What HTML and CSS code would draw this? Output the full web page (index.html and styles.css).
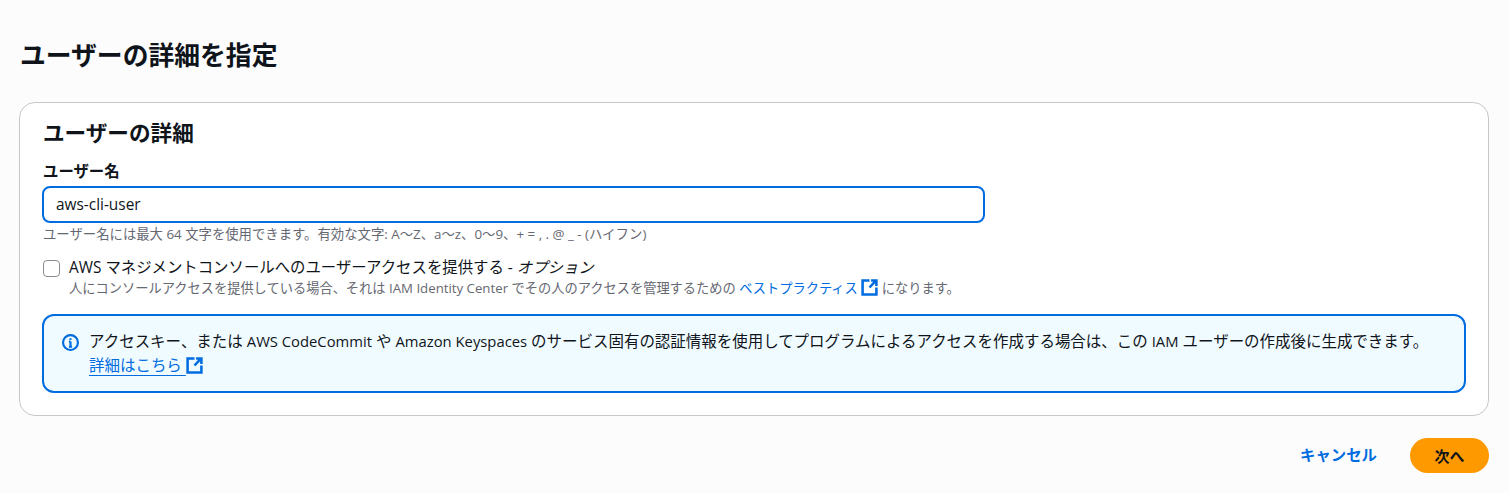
FILE: index.html
```html
<!DOCTYPE html>
<html lang="ja">
<head>
    <meta charset="UTF-8">
    <title>ユーザーの詳細を指定</title>
    <link rel="stylesheet" href="styles.css">
</head>
<body>
    <div class="page">
        <h1 class="page-title">ユーザーの詳細を指定</h1>

        <div class="card">
            <h2 class="card-title">ユーザーの詳細</h2>

            <label class="field-label" for="userName">ユーザー名</label>
            <input class="text-input" id="userName" type="text" value="aws-cli-user">
            <p class="hint">ユーザー名には最大 64 文字を使用できます。有効な文字: A～Z、a～z、0～9、+ = , . @ _ - (ハイフン)</p>

            <div class="check-row">
                <span class="checkbox"></span>
                <div>
                    <div class="check-label">AWS マネジメントコンソールへのユーザーアクセスを提供する - <em>オプション</em></div>
                    <div class="check-desc">人にコンソールアクセスを提供している場合、それは IAM Identity Center でその人のアクセスを管理するための <a class="link" href="#">ベストプラクティス</a>
                        <svg class="ext-icon" viewBox="0 0 16 16"><path d="M8 1.5H1.5v13h13V8M8 8l6-6.5M9.5 1.5h5v5"/></svg>
                        になります。</div>
                </div>
            </div>

            <div class="info-box">
                <svg class="info-icon" viewBox="0 0 16 16"><circle cx="8" cy="8" r="7"/><path d="M8 7v5M6.5 12h3M6.5 7H8M8 4v1.6"/></svg>
                <div class="info-text">
                    <div>アクセスキー、または <span class="latin">AWS CodeCommit</span> や <span class="latin">Amazon Keyspaces</span> のサービス固有の認証情報を使用してプログラムによるアクセスを作成する場合は、この <span class="latin">IAM</span> ユーザーの作成後に生成できます。</div>
                    <a class="link info-link" href="#">詳細はこちら </a>
                    <svg class="ext-icon" viewBox="0 0 16 16"><path d="M8 1.5H1.5v13h13V8M8 8l6-6.5M9.5 1.5h5v5"/></svg>
                </div>
            </div>
        </div>

        <div class="actions">
            <a class="cancel" href="#">キャンセル</a>
            <button class="primary" type="button">次へ</button>
        </div>
    </div>
</body>
</html>
```

FILE: styles.css
```css
* {
    box-sizing: border-box;
}
body {
    margin: 0;
    background-color: #fcfcfd;
    color: #0f141a;
    font-family: "Open Sans", "Noto Sans CJK JP", sans-serif;
    font-size: 15.4px;
    line-height: 20px;
}
.page {
    padding: 38px 20px 0 19px;
}
.page-title {
    margin: 0 0 30px 1px;
    font-size: 25.8px;
    line-height: 34px;
    font-weight: 700;
}
.card {
    height: 314px;
    padding: 15px 23px 0 22px;
    background-color: #fff;
    border: 1px solid #c6c6cd;
    border-radius: 16px;
}
.card-title {
    margin: 0 0 14px 1px;
    font-size: 21.6px;
    line-height: 30px;
    font-weight: 700;
}
.field-label {
    display: block;
    margin-left: 1px;
    font-weight: 700;
    line-height: 20px;
    margin-bottom: 4px;
}
.text-input {
    display: block;
    width: 943px;
    height: 37px;
    padding: 0 12px;
    border: 2px solid #006ce0;
    border-radius: 8px;
    color: #0f141a;
    font: inherit;
    outline: none;
}
.hint {
    margin: 2px 0 0 1px;
    color: #656871;
    font-size: 13.36px;
    line-height: 18px;
}
.check-row {
    display: flex;
    gap: 9px;
    margin-top: 15px;
    margin-left: 1px;
}
.checkbox {
    flex: none;
    width: 17px;
    height: 17px;
    margin-top: 2px;
    border: 1.5px solid #8c8c94;
    border-radius: 4px;
    background-color: #fff;
}
.check-label {
    line-height: 20px;
}
.check-desc {
    color: #656871;
    font-size: 13.24px;
    line-height: 20px;
}
.link {
    color: #006ce0;
    text-decoration: none;
}
.ext-icon {
    width: 17px;
    height: 17px;
    vertical-align: -3px;
    fill: none;
    stroke: #006ce0;
    stroke-width: 2.4;
}
.info-box {
    display: flex;
    gap: 10px;
    width: 1424px;
    height: 79px;
    margin-top: 16px;
    padding: 13px 18px;
    background-color: #f0fbff;
    border: 2px solid #006ce0;
    border-radius: 12px;
}
.info-icon {
    flex: none;
    width: 17px;
    height: 17px;
    margin-top: 5px;
    fill: none;
    stroke: #006ce0;
    stroke-width: 2;
}
.info-text {
    font-size: 15.47px;
    line-height: 24px;
}
.latin {
    font-size: 14.8px;
}
.info-link {
    text-decoration: underline;
    text-underline-offset: 4px;
    text-decoration-thickness: 1px;
}
.actions {
    display: flex;
    justify-content: flex-end;
    align-items: center;
    gap: 33px;
    margin-top: 22px;
}
.cancel {
    color: #006ce0;
    font-weight: 700;
    text-decoration: none;
    padding-top: 1px;
}
.primary {
    width: 79px;
    height: 35px;
    padding-top: 1px;
    background-color: #ff9900;
    color: #0f141a;
    border: none;
    border-radius: 18px;
    font: inherit;
    font-size: 15px;
    font-weight: 700;
    cursor: pointer;
}
```
